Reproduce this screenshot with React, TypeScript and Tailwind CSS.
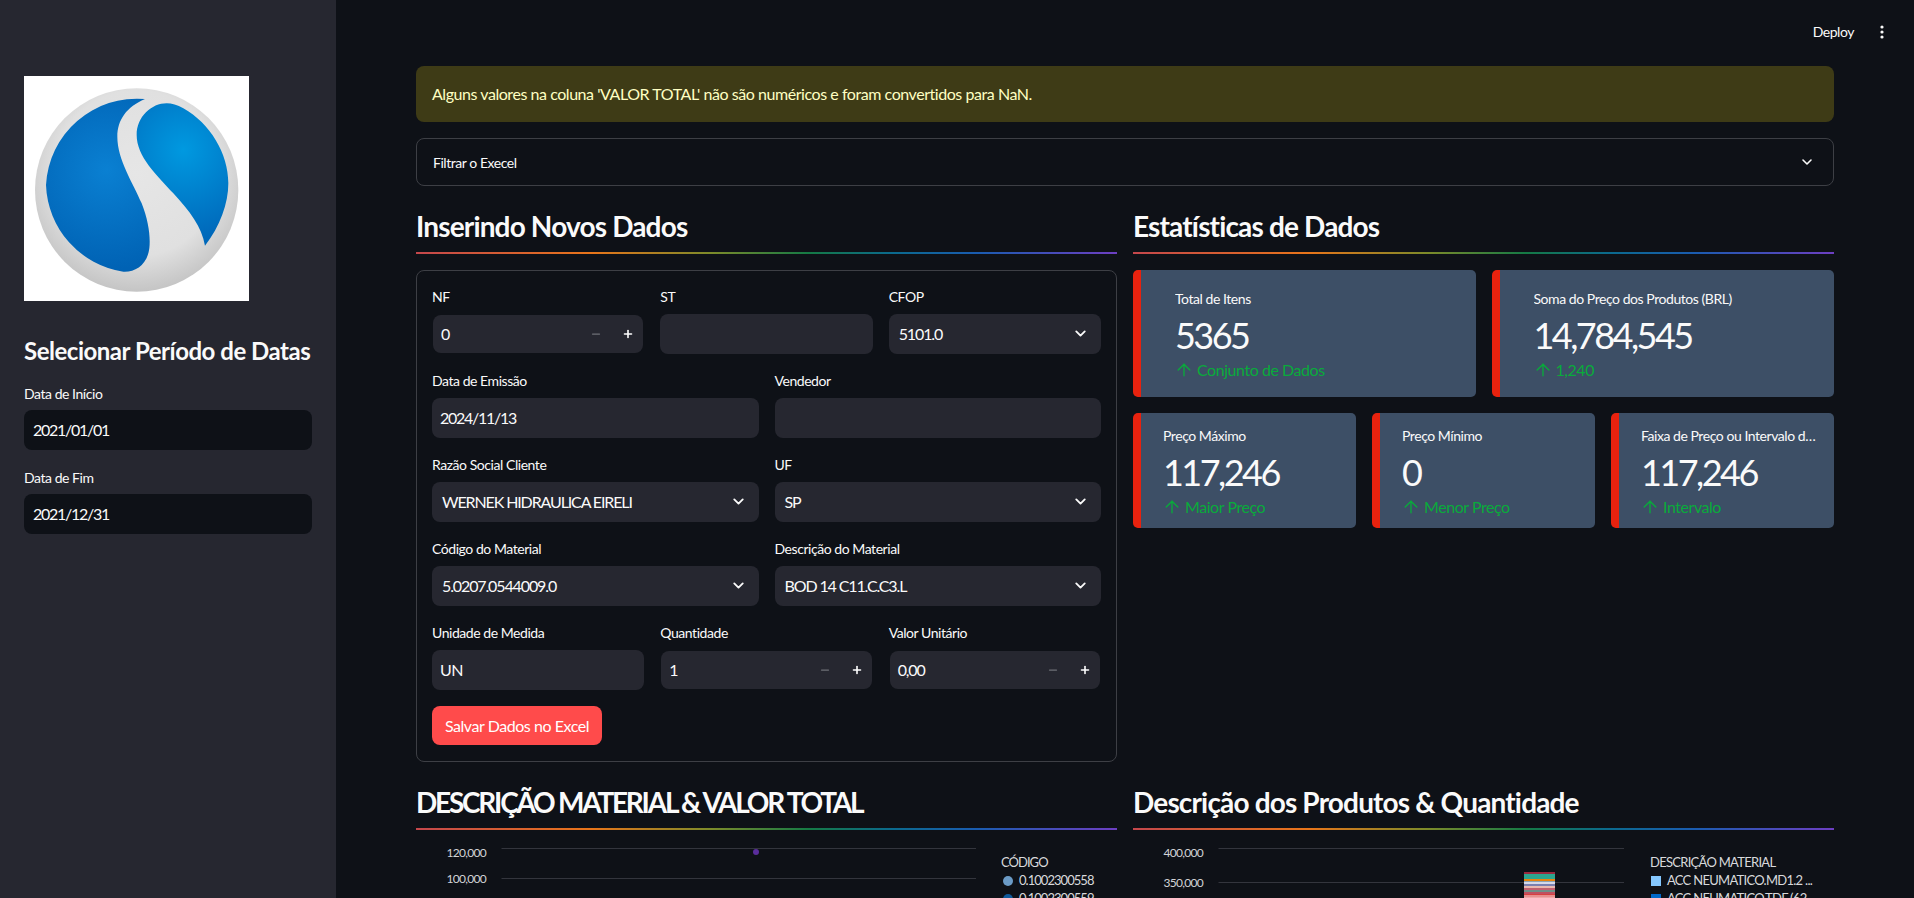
import React from "react";
import { ChevronDown, Minus, Plus, ArrowUp } from "lucide-react";

const RAINBOW = "h-[2px] bg-[linear-gradient(to_right,#c4474c_0%,#e8751a_25%,#7d8b2a_42%,#157a45_56%,#0b6a8e_68%,#1a5cb0_80%,#6d3fc2_100%)]";

function Logo() {
  return (
    <svg viewBox="12 18 675 675" className="block w-[225px] h-[225px] bg-white">
      <defs>
        <radialGradient id="ring" gradientUnits="userSpaceOnUse" cx="350" cy="310" r="365">
          <stop offset="0" stopColor="#e6e6e6" />
          <stop offset="0.68" stopColor="#e0e0e0" />
          <stop offset="1" stopColor="#c2c2c2" />
        </radialGradient>
        <radialGradient id="bl" gradientUnits="userSpaceOnUse" cx="260" cy="300" r="300">
          <stop offset="0" stopColor="#0a80d2" />
          <stop offset="1" stopColor="#0062b4" />
        </radialGradient>
        <radialGradient id="br" gradientUnits="userSpaceOnUse" cx="490" cy="240" r="270">
          <stop offset="0" stopColor="#0099e0" />
          <stop offset="1" stopColor="#0068ba" />
        </radialGradient>
      </defs>
      <circle cx="350" cy="360" r="305" fill="url(#ring)" />
      <path fill="url(#bl)" d="M375 87 C320 110 292 150 292 200 C292 270 340 340 365 400 C385 450 392 500 388 535 C382 585 345 607 310 605 A273 273 0 0 1 78 345 A273 273 0 0 1 375 87 Z" />
      <path fill="url(#br)" d="M440 100 C395 100 350 140 350 195 C350 260 410 315 460 370 C510 425 545 470 555 527 C600 470 625 400 625 340 C625 250 570 160 490 115 C472 105 455 100 440 100 Z" />
    </svg>
  );
}

function Field({ label, className = "", children }: { label: string; className?: string; children: React.ReactNode }) {
  return (
    <div className={className}>
      <div className="h-[27px] text-[14px] leading-[20px] text-[#fafafa]">{label}</div>
      {children}
    </div>
  );
}

function TextBox({ value = "", tight }: { value?: string; tight?: boolean }) {
  return <div className={`h-10 rounded-lg bg-[#262730] pl-2 flex items-center text-[16px] text-[#fafafa] ${tight ? "tracking-[-0.08em]" : ""}`}>{value}</div>;
}

function SelectBox({ value }: { value: string }) {
  return (
    <div className="h-10 rounded-lg bg-[#262730] pl-[10px] pr-[12px] flex items-center justify-between text-[16px] text-[#fafafa]">
      <span className="tracking-[-0.07em]">{value}</span>
      <ChevronDown size={17} strokeWidth={2.6} className="-mt-[2px]" />
    </div>
  );
}

function NumberBox({ value }: { value: string }) {
  return (
    <div className="h-[38px] m-px rounded-lg bg-[#262730] pl-2 pr-[9px] flex items-center justify-between text-[16px] text-[#fafafa]">
      <span className="tracking-[-0.07em]">{value}</span>
      <div className="flex items-center gap-[20px]">
        <Minus size={12} strokeWidth={2.5} className="text-[#6e7076]" />
        <Plus size={12} strokeWidth={3.2} className="text-white" />
      </div>
    </div>
  );
}

function Section({ title, upper, children }: { title: string; upper?: boolean; children: React.ReactNode }) {
  return (
    <div className="min-w-0">
      <h3 className={`pt-[23px] h-[66px] text-[28px] leading-[34px] font-bold text-[#fafafa] whitespace-nowrap ${upper ? "tracking-[-0.08em]" : "tracking-[-0.03em]"}`}>{title}</h3>
      <div className={RAINBOW} />
      <div className="mt-4">{children}</div>
    </div>
  );
}

function Metric({ label, value, delta, wide }: { label: string; value: string; delta: string; wide?: boolean }) {
  return (
    <div className={`rounded-[5px] bg-[#3d4f66] border-l-8 border-[#e8220e] min-w-0 ${wide ? "h-[127px] pl-[34px] pt-[18px]" : "h-[115px] pl-[22px] pt-[12px] pr-[11px]"}`}>
      <div className="h-[24px] text-[14px] leading-[22px] text-[#fafafa] truncate">{label}</div>
      <div className="h-[46px] text-[36px] leading-[46px] text-[#fafafa] tracking-[-0.07em]">{value}</div>
      <div className="flex items-center gap-[3px] text-[16px] leading-[24px] text-[#09ab3b]">
        <ArrowUp size={20} strokeWidth={1.6} className="-ml-px" />
        <span>{delta}</span>
      </div>
    </div>
  );
}

function AxisText({ x, y, children }: { x: number; y: number; children: React.ReactNode }) {
  return (
    <text x={x} y={y} textAnchor="end" fill="#d2d3d6" fontSize="12" className="tracking-[-0.06em]">{children}</text>
  );
}

const STRIPES: [number, number, string][] = [
  [42, 2, "#9a2a3e"], [44, 5, "#2da58e"], [49, 2, "#e8820c"], [51, 1, "#8aa4b4"], [52, 2, "#d4d8ea"],
  [54, 2, "#7a80b0"], [56, 2, "#e8b8b0"], [58, 2, "#c06070"], [60, 2, "#6f8f88"], [62, 2, "#c05060"],
  [64, 1, "#d84040"], [65, 2, "#e89090"], [67, 2, "#f0a8a8"],
];

function LegendTitle({ children }: { children: React.ReactNode }) {
  return <div className="h-[18px] leading-[18px] text-[13px] text-[#d8d9dc] mb-[1px]">{children}</div>;
}

function LegendRow({ mark, text }: { mark: React.ReactNode; text: string }) {
  return (
    <div className="h-[18px] flex items-center gap-[6px] text-[13px] text-[#d8d9dc] whitespace-nowrap">
      {mark}
      <span>{text}</span>
    </div>
  );
}

export default function App() {
  return (
    <div className="h-[898px] overflow-hidden flex bg-[#0e1117] text-[#fafafa] tracking-[-0.028em] font-['Lato','Noto_Sans',sans-serif]">
      <aside className="w-[336px] shrink-0 bg-[#262730] pl-6 pr-6 pt-[76px]">
        <Logo />
        <h2 className="mt-[34px] text-[24px] leading-[32px] font-bold whitespace-nowrap tracking-[-0.02em]">Selecionar Período de Datas</h2>
        <div className="mt-[17px] h-[26px] text-[14px] leading-[20px] ">Data de Início</div>
        <div className="h-10 rounded-lg bg-[#0e1117] pl-[9px] flex items-center text-[16px] tracking-[-0.08em]">2021/01/01</div>
        <div className="mt-[16px] h-[28px] text-[14px] leading-[24px]">Data de Fim</div>
        <div className="h-10 rounded-lg bg-[#0e1117] pl-[9px] flex items-center text-[16px] tracking-[-0.08em]">2021/12/31</div>
      </aside>

      <main className="relative flex-1 min-w-0 px-20 pt-[66px]">
        <div className="absolute top-[20px] right-[30px] flex items-center gap-[26px] text-[14px] leading-6">
          <span>Deploy</span>
          <svg width="4" height="14" viewBox="0 0 4 14" fill="#fafafa">
            <circle cx="2" cy="2" r="1.6" /><circle cx="2" cy="7" r="1.6" /><circle cx="2" cy="12" r="1.6" />
          </svg>
        </div>

        <div className="h-14 rounded-lg bg-[#3e3b16] px-4 flex items-center text-[16px] text-[#ffffc2]">
          Alguns valores na coluna 'VALOR TOTAL' não são numéricos e foram convertidos para NaN.
        </div>
        <div className="mt-4 h-12 rounded-lg border border-[#3d3f45] pl-4 pr-[18px] flex items-center justify-between text-[14px]">
          <span>Filtrar o Execel</span>
          <ChevronDown size={16} strokeWidth={2.4} />
        </div>

        <div className="grid grid-cols-2 gap-x-4">
          <Section title="Inserindo Novos Dados">
            <div className="h-[492px] rounded-lg border border-[#3d3f45] px-[15px] py-4 flex flex-col gap-[17px]">
              <div className="grid grid-cols-3 gap-4">
                <Field label="NF"><NumberBox value="0" /></Field>
                <Field label="ST"><TextBox /></Field>
                <Field label="CFOP"><SelectBox value="5101.0" /></Field>
              </div>
              <div className="grid grid-cols-2 gap-4">
                <Field label="Data de Emissão"><TextBox value="2024/11/13" tight /></Field>
                <Field label="Vendedor"><TextBox /></Field>
              </div>
              <div className="grid grid-cols-2 gap-4">
                <Field label="Razão Social Cliente"><SelectBox value="WERNEK HIDRAULICA EIRELI" /></Field>
                <Field label="UF"><SelectBox value="SP" /></Field>
              </div>
              <div className="grid grid-cols-2 gap-4">
                <Field label="Código do Material"><SelectBox value="5.0207.0544009.0" /></Field>
                <Field label="Descrição do Material"><SelectBox value="BOD 14 C11.C.C3.L" /></Field>
              </div>
              <div className="grid grid-cols-3 gap-4">
                <Field label="Unidade de Medida"><TextBox value="UN" /></Field>
                <Field label="Quantidade"><NumberBox value="1" /></Field>
                <Field label="Valor Unitário"><NumberBox value="0,00" /></Field>
              </div>
              <button className="-mt-px w-[170px] h-10 rounded-lg bg-[#ff4b4b] text-[16px] text-white">Salvar Dados no Excel</button>
            </div>
          </Section>

          <Section title="Estatísticas de Dados">
            <div className="grid grid-cols-2 gap-4">
              <Metric wide label="Total de Itens" value="5365" delta="Conjunto de Dados" />
              <Metric wide label="Soma do Preço dos Produtos (BRL)" value="14,784,545" delta="1,240" />
            </div>
            <div className="mt-4 grid grid-cols-3 gap-4">
              <Metric label="Preço Máximo" value="117,246" delta="Maior Preço" />
              <Metric label="Preço Mínimo" value="0" delta="Menor Preço" />
              <Metric label="Faixa de Preço ou Intervalo dos Dados" value="117,246" delta="Intervalo" />
            </div>
          </Section>

          <Section upper title="DESCRIÇÃO MATERIAL & VALOR TOTAL">
            <div className="flex -mt-4">
              <svg width="585" height="68" className="shrink-0 block">
                <line x1="85.5" x2="560" y1="18.5" y2="18.5" stroke="#33353d" />
                <line x1="85.5" x2="560" y1="48.5" y2="48.5" stroke="#33353d" />
                <AxisText x={70} y={27}>120,000</AxisText>
                <AxisText x={70} y={53}>100,000</AxisText>
                <circle cx="340" cy="22" r="3" fill="#5a2d9c" />
              </svg>
              <div className="pt-[23px] tracking-[-0.06em]">
                <LegendTitle>CÓDIGO</LegendTitle>
                <LegendRow mark={<span className="ml-[2px] w-[10px] h-[10px] rounded-full bg-[#6b9bc6]" />} text="0.1002300558" />
                <LegendRow mark={<span className="ml-[2px] w-[10px] h-[10px] rounded-full bg-[#0f5a9c]" />} text="0.1002300559" />
              </div>
            </div>
          </Section>

          <Section title="Descrição dos Produtos & Quantidade">
            <div className="flex -mt-4">
              <svg width="517" height="68" className="shrink-0 block">
                <line x1="85.5" x2="491" y1="18.5" y2="18.5" stroke="#33353d" />
                <line x1="85.5" x2="491" y1="52.5" y2="52.5" stroke="#33353d" />
                <AxisText x={70} y={27}>400,000</AxisText>
                <AxisText x={70} y={57}>350,000</AxisText>
                {STRIPES.map(([y, h, c]) => (
                  <rect key={y} x="391" y={y} width="31" height={h} fill={c} />
                ))}
              </svg>
              <div className="pt-[23px] tracking-[-0.045em]">
                <LegendTitle>DESCRIÇÃO MATERIAL</LegendTitle>
                <LegendRow mark={<span className="ml-px w-[10px] h-[10px] bg-[#85c8ff]" />} text="ACC NEUMATICO.MD1.2 ..." />
                <LegendRow mark={<span className="ml-px w-[10px] h-[10px] bg-[#0068c9]" />} text="ACC NEUMATICO.TDF (62 ..." />
              </div>
            </div>
          </Section>
        </div>
      </main>
    </div>
  );
}
